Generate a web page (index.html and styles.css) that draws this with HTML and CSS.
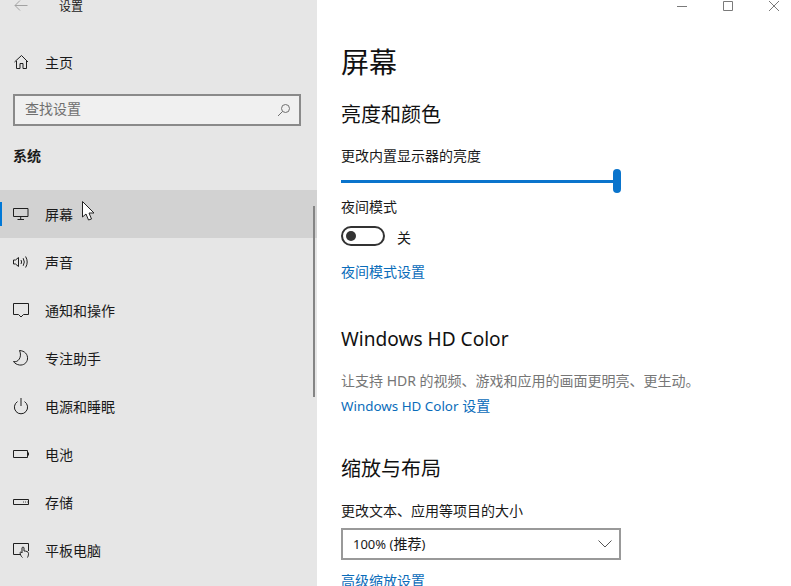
FILE: index.html
```html
<!DOCTYPE html>
<html lang="zh-CN">
<head>
<meta charset="utf-8">
<title>设置</title>
<link rel="stylesheet" href="styles.css">
</head>
<body>
<div class="window">
  <aside class="sidebar">
    <div class="titlebar">
      <svg class="back" width="14" height="12" viewBox="0 0 14 12"><path d="M6 0.5 L1 5.5 L6 10.5 M1 5.5 H13.5" /></svg>
      <span class="apptitle">设置</span>
    </div>
    <div class="home">
      <svg class="icon" viewBox="0 0 18 18"><path d="M2.5 9 L9.5 2.5 L16 9 M4.5 8 V15.5 H8 V10.5 H11 V15.5 H14.5 V8"/></svg>
      <span>主页</span>
    </div>
    <div class="search">
      <span class="search-text">查找设置</span>
      <svg class="search-icon" width="14" height="14" viewBox="0 0 14 14"><circle cx="8.5" cy="5.5" r="4"/><path d="M5.5 8.5 L1 13"/></svg>
    </div>
    <div class="group">系统</div>
    <nav class="nav">
      <div class="item active">
        <svg class="icon" viewBox="0 0 18 18"><path d="M1.5 3.5 H16 V11.5 H1.5 Z M8.7 11.5 V14 M5.5 14.5 H12"/></svg>
        <span>屏幕</span>
      </div>
      <div class="item">
        <svg class="icon" viewBox="0 0 18 18"><path d="M1.5 7 H3.5 L6.5 4.5 V13.5 L3.5 11 H1.5 Z M9 7 Q10.2 9 9 11 M11.2 5.2 Q13.4 9 11.2 12.8 M13.6 3.5 Q16.8 9 13.6 14.5"/></svg>
        <span>声音</span>
      </div>
      <div class="item">
        <svg class="icon" viewBox="0 0 18 18"><path d="M1.5 2.5 H16.5 V13.5 H11.5 L9 16 L6.5 13.5 H1.5 Z"/></svg>
        <span>通知和操作</span>
      </div>
      <div class="item">
        <svg class="icon" viewBox="0 0 18 18"><path d="M7.5 1.5 C12.5 1.8 16 5.2 15.5 10 C15 14 11.5 16.5 7.5 16 C5 15.7 2.8 14.5 1.5 12.5 C6 14 10.5 8 7.5 1.5 Z"/></svg>
        <span>专注助手</span>
      </div>
      <div class="item">
        <svg class="icon" viewBox="0 0 18 18"><path d="M5.5 4.6 A6.6 6.6 0 1 0 12.5 4.6 M9 1 V9"/></svg>
        <span>电源和睡眠</span>
      </div>
      <div class="item">
        <svg class="icon" viewBox="0 0 18 18"><path d="M1.5 5.5 H15.5 V12.5 H1.5 Z"/><path class="solid" d="M16 7.5 H17 V10.5 H16 Z"/></svg>
        <span>电池</span>
      </div>
      <div class="item">
        <svg class="icon" viewBox="0 0 18 18"><path d="M1.5 6.5 H16.5 V11.5 H1.5 Z M11 9 H11.8 M13 9 H13.8 M15 9 H15.6"/></svg>
        <span>存储</span>
      </div>
      <div class="item">
        <svg class="icon" viewBox="0 0 18 18"><path d="M8 13.5 H1.5 V2.5 H16.5 V10 M10.5 16.5 C9 15.5 8.3 13.5 8 11.5 C8.6 10.8 9.6 11.2 10 12 V7 C10 5.8 12 5.8 12 7 V10 C14 10 16.5 10.5 16.5 12.5 C16.5 14.5 16 15.5 15.5 16.5"/></svg>
        <span>平板电脑</span>
      </div>
    </nav>
    <div class="scrollbar"></div>
  </aside>
  <main class="content">
    <div class="controls">
      <svg width="10" height="12" viewBox="0 0 10 12"><path d="M0 6.5 H10"/></svg>
      <svg width="10" height="12" viewBox="0 0 10 12"><path d="M0.5 1.5 H9.5 V10.5 H0.5 Z"/></svg>
      <svg width="10" height="12" viewBox="0 0 10 12"><path d="M0 1 L10 11 M10 1 L0 11"/></svg>
    </div>
    <h1 class="page-title">屏幕</h1>
    <h2 class="heading h-first">亮度和颜色</h2>
    <div class="label l-brightness">更改内置显示器的亮度</div>
    <div class="slider"><div class="track"></div><div class="thumb"></div></div>
    <div class="label l-night">夜间模式</div>
    <div class="toggle-row">
      <div class="toggle"><div class="knob"></div></div>
      <span>关</span>
    </div>
    <a class="link l-nightlink">夜间模式设置</a>
    <h2 class="heading h-hd">Windows HD Color</h2>
    <div class="desc">让支持 HDR 的视频、游戏和应用的画面更明亮、更生动。</div>
    <a class="link l-hdlink"><span class="latin-link">Windows HD Color</span> 设置</a>
    <h2 class="heading h-scale">缩放与布局</h2>
    <div class="label l-size">更改文本、应用等项目的大小</div>
    <div class="select">
      <span class="select-text"><span class="latin-select">100% (</span>推荐<span class="latin-select">)</span></span>
      <svg class="chev" width="14" height="8" viewBox="0 0 14 8"><path d="M0.5 0.5 L7 7 L13.5 0.5"/></svg>
    </div>
    <a class="link l-adv">高级缩放设置</a>
  </main>
  <svg class="cursor" width="13" height="20" viewBox="0 0 13 20"><path d="M0.5 0.5 V16 L4 13 L6.5 19 L9.5 18 L7 12 L12 12 Z"/></svg>
</div>
</body>
</html>
```
FILE: styles.css
```css
* { box-sizing: border-box; }
html, body { margin: 0; height: 100%; overflow: hidden; }
body {
  font-family: "Noto Sans", "Noto Sans CJK SC", sans-serif;
  font-size: 14px;
  color: #1a1a1a;
  background: #fff;
}
.window { position: relative; display: flex; width: 791px; height: 586px; overflow: hidden; }

/* Sidebar */
.sidebar { position: relative; width: 317px; flex: none; background: #e6e6e6; }
.titlebar { display: flex; align-items: center; height: 12px; padding-left: 14px; }
.back { fill: none; stroke: #a2a2a2; stroke-width: 1; }
.apptitle { margin-left: 31px; padding-top: 2px; font-size: 12px; line-height: 14px; }
.icon { width: 18px; height: 18px; flex: none; fill: none; stroke: #1f1f1f; stroke-width: 1; }
.icon .solid { fill: #1f1f1f; stroke: none; }
.home, .item { display: flex; align-items: center; gap: 15px; height: 48px; padding-left: 12px; }
.home { margin-top: 26px; }
.search {
  display: flex; align-items: center; justify-content: space-between;
  height: 32px; margin: 8px 16px 0 13px; padding: 0 8px 0 10px;
  background: #f0f0f0; border: 2px solid #8a8a8a; color: #6f6f6f;
}
.search-text { padding-bottom: 5px; }
.search-icon { fill: none; stroke: #6f6f6f; stroke-width: 1; }
.group { margin: 20px 0 0 13px; font-weight: 700; line-height: 20px; }
.nav { margin-top: 24px; }
.item.active { position: relative; background: #d2d2d2; }
.item.active::before {
  content: ""; position: absolute; left: 0; top: 12px;
  width: 2px; height: 24px; background: #0078d7;
}
.scrollbar { position: absolute; left: 313px; top: 206px; width: 2px; height: 191px; background: #858585; }

/* Content */
.content { flex: 1; min-width: 0; padding-left: 24px; }
.controls { display: flex; justify-content: flex-end; gap: 36px; height: 12px; margin-right: 12px; }
.controls svg { fill: none; stroke: #7a7a7a; stroke-width: 1; }
.page-title { margin: 30px 0 0; font-size: 28px; font-weight: 400; line-height: 40px; color: #111; }
.heading { margin: 0; font-size: 20px; font-weight: 400; line-height: 28px; color: #111; }
.h-first { margin-top: 19px; }
.h-hd { margin-top: 43px; font-size: 19.1px; }
.h-scale { margin-top: 39px; }
.label { line-height: 20px; }
.l-brightness { margin-top: 17px; }
.l-night { margin-top: 4px; }
.l-size { margin-top: 18px; }
.slider { position: relative; width: 280px; height: 24px; margin-top: 3px; display: flex; align-items: center; justify-content: space-between; }
.track { flex: 1; height: 3px; background: #0a74cc; }
.thumb { width: 8px; height: 24px; border-radius: 4px; background: #0a74cc; }
.toggle-row { display: flex; align-items: center; gap: 12px; margin-top: 9px; height: 20px; }
.toggle-row span { position: relative; top: 1px; }
.toggle { display: flex; align-items: center; width: 44px; height: 20px; padding-left: 3px; border: 2px solid #333; border-radius: 10px; }
.knob { width: 10px; height: 10px; border-radius: 50%; background: #333; }
.link { display: block; line-height: 20px; color: #0a6cba; }
.l-nightlink { margin-top: 16px; }
.l-hdlink { margin-top: 5px; }
.latin-link { font-size: 13.4px; }
.l-adv { margin-top: 11px; }
.desc { margin-top: 18px; line-height: 20px; color: #767676; }
.select {
  display: flex; align-items: center; justify-content: space-between;
  width: 280px; height: 32px; margin-top: 7px; padding: 0 7px 0 10px;
  border: 2px solid #999; color: #1a1a1a;
}
.select-text { padding-bottom: 2px; }
.latin-select { font-size: 13px; }
.chev { fill: none; stroke: #555; stroke-width: 1; }

/* Pointer */
.cursor { position: absolute; left: 82px; top: 201px; fill: #fff; stroke: #222; stroke-width: 1; }
```
